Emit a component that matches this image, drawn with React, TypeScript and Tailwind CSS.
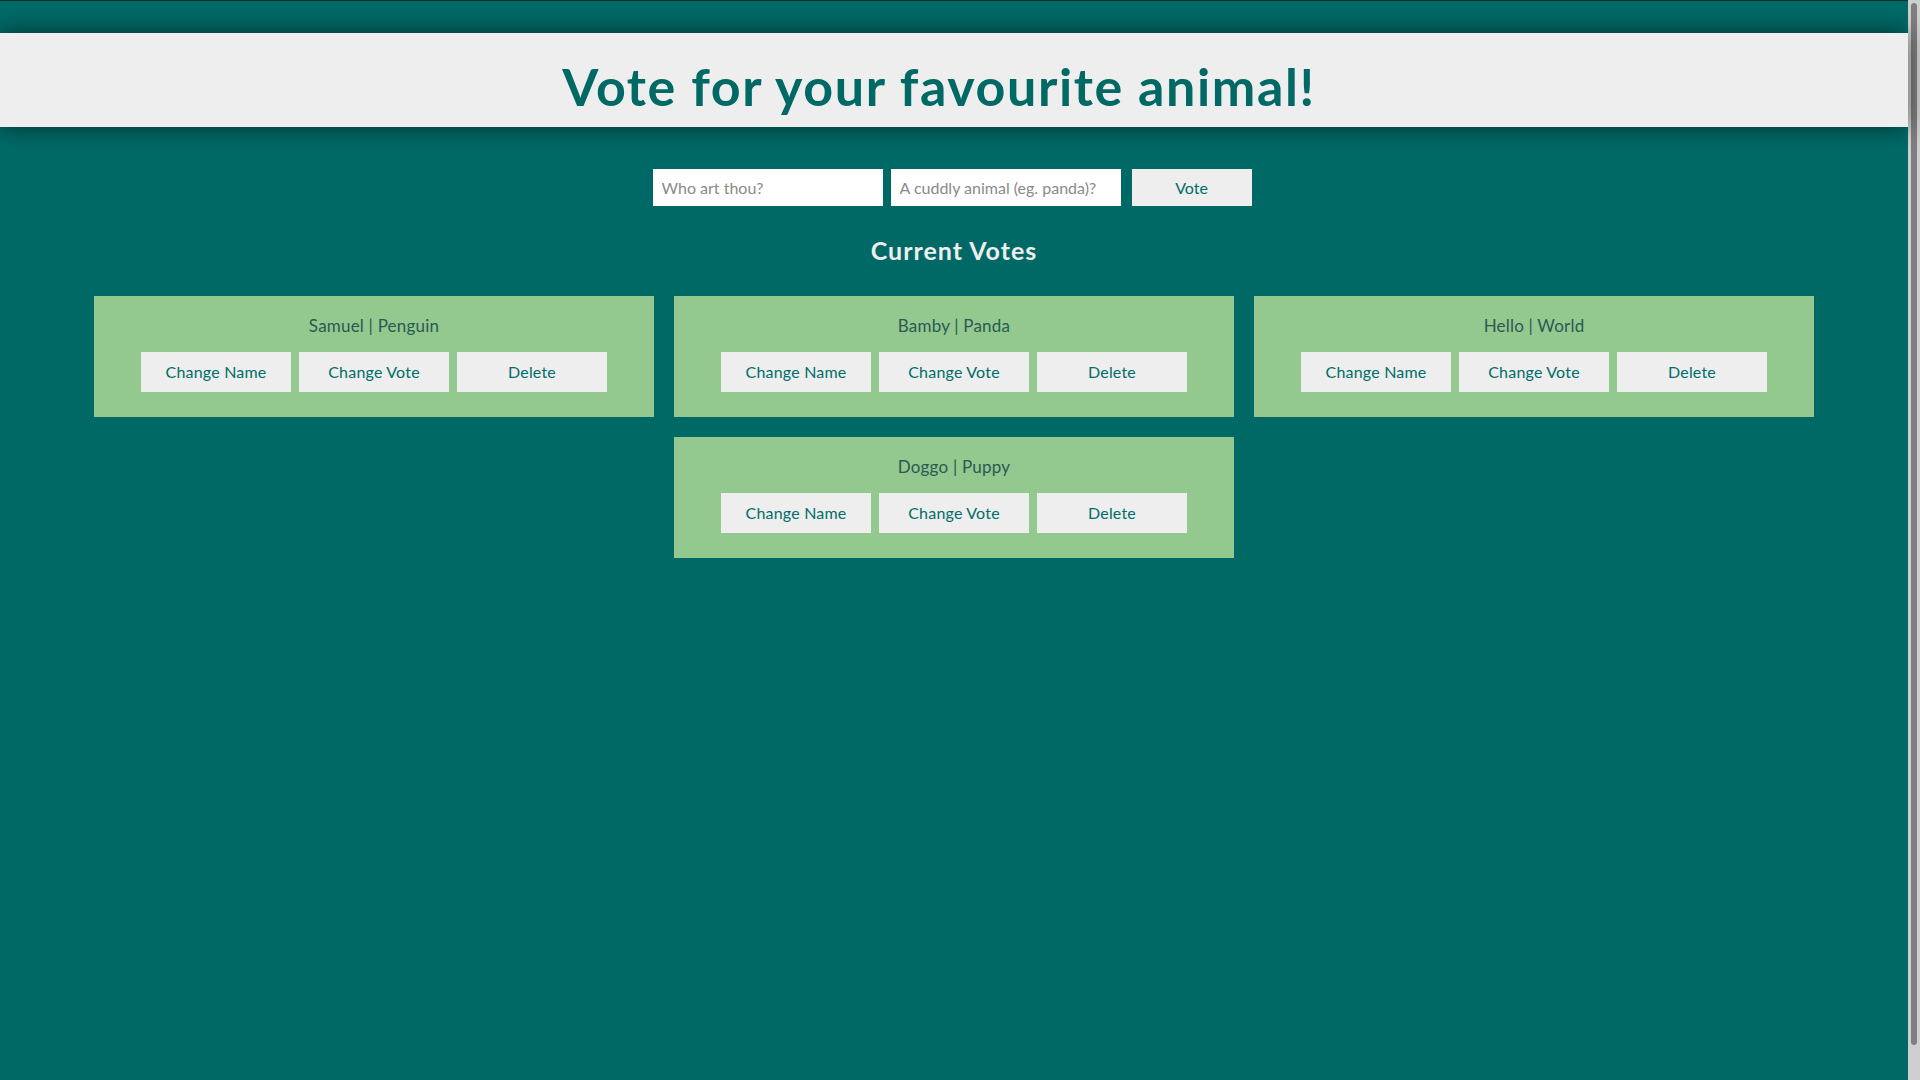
import React from "react";

const votes = [
  { name: "Samuel", animal: "Penguin" },
  { name: "Bamby", animal: "Panda" },
  { name: "Hello", animal: "World" },
  { name: "Doggo", animal: "Puppy" },
];

function Card({ name, animal }: { name: string; animal: string }) {
  return (
    <div className="w-[560px] h-[121px] bg-[#93c88e] pt-[18px] flex flex-col items-center">
      <div className="text-[17px] leading-[24px] text-[#2a5a52] tracking-[0.2px]">
        {name} | {animal}
      </div>
      <div className="mt-[14px] flex gap-[8px]">
        {["Change Name", "Change Vote", "Delete"].map((b) => (
          <button
            key={b}
            className="w-[150px] h-[40px] bg-[#eeeeee] text-[#006d6a] text-[16px] tracking-[0.2px]"
          >
            {b}
          </button>
        ))}
      </div>
    </div>
  );
}

export default function App() {
  return (
    <div
      className="h-screen overflow-hidden flex bg-[#006966]"
      style={{ fontFamily: "Lato, 'Open Sans', sans-serif" }}
    >
      <main className="flex-1 flex flex-col">
        <div className="h-px bg-[#0b2f2d]" />
        <header className="mt-[32px] h-[94px] bg-[#eeeeee] shadow-[0_0_22px_rgba(0,0,0,0.55)] flex items-center justify-center relative z-10 pt-[12px] pr-[30px]">
          <h1 className="text-[52px] font-bold text-[#006966] leading-none tracking-[1.6px]">
            Vote for your favourite animal!
          </h1>
        </header>
        <div className="mt-[42px] flex justify-center pr-[4px]">
          <input
            className="w-[230px] h-[37px] bg-white px-[9px] text-[16px] text-[#555] placeholder:text-[#8a8a8a] outline-none"
            placeholder="Who art thou?"
          />
          <input
            className="ml-[8px] w-[230px] h-[37px] bg-white px-[9px] text-[16px] text-[#555] placeholder:text-[#8a8a8a] outline-none"
            placeholder="A cuddly animal (eg. panda)?"
          />
          <button className="ml-[11px] w-[120px] h-[37px] bg-[#eeeeee] text-[#006d6a] text-[16px]">
            Vote
          </button>
        </div>
        <h2 className="mt-[28px] text-center text-[25px] leading-[32px] font-bold text-[#eeeeee] tracking-[1px]">
          Current Votes
        </h2>
        <div className="mt-[30px] mx-auto w-[1720px] flex flex-wrap justify-center gap-[20px]">
          {votes.map((v) => (
            <Card key={v.name} name={v.name} animal={v.animal} />
          ))}
        </div>
      </main>
      <aside className="w-[12px] bg-[#cfcfcf] flex justify-center pt-[3px] pb-[35px]">
        <div className="w-[6px] h-full rounded-full bg-[#7f7f7f]" />
      </aside>
    </div>
  );
}
